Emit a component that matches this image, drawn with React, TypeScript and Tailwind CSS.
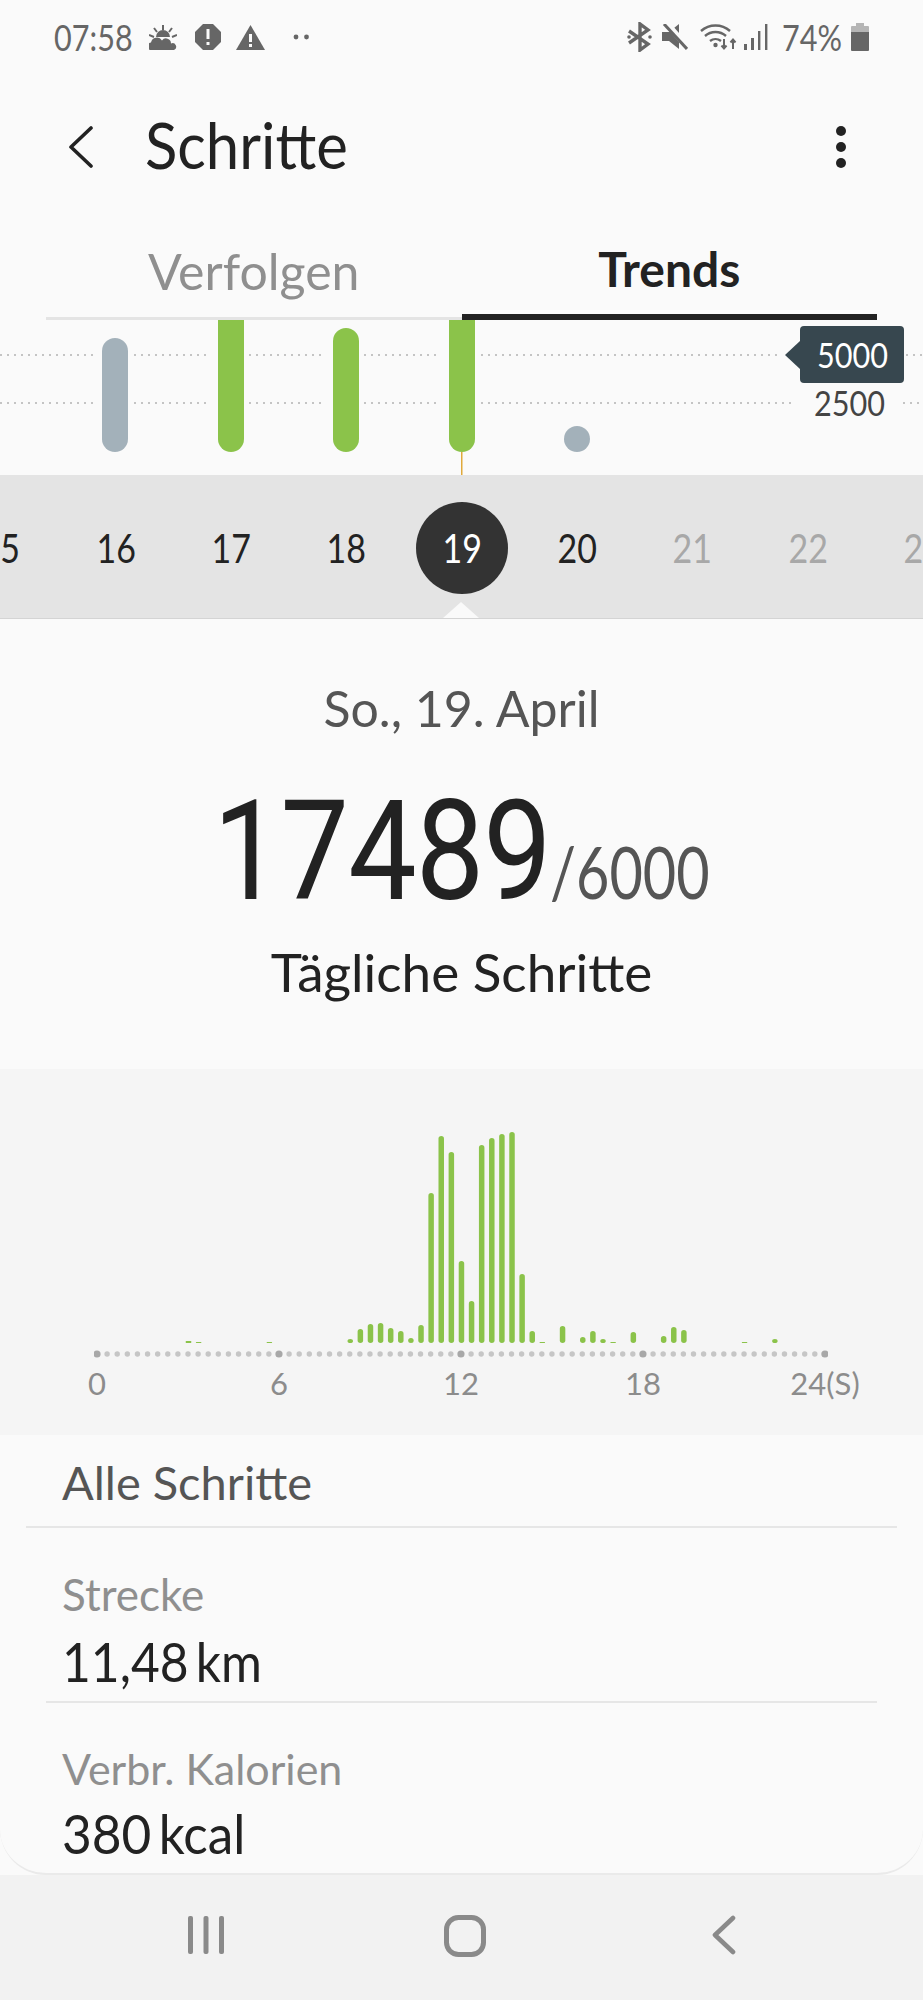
const hand = "font-['Lato',sans-serif]";

const hourly: [number, number][] = [
  [9, 2], [10, 1], [17, 1], [25, 4], [26, 14], [27, 19], [28, 20], [29, 15], [30, 12], [31, 5], [32, 18],
  [33, 150], [34, 207], [35, 191], [36, 82], [37, 42], [38, 198], [39, 205], [40, 209], [41, 211], [42, 69],
  [43, 12], [44, 1], [46, 17], [48, 6], [49, 12], [50, 4], [51, 1], [53, 11], [56, 7], [57, 16], [58, 13], [64, 1], [67, 4],
];

function StatusBar() {
  return (
    <div className="flex h-[70px] items-center justify-between pl-[54px] pr-[54px] pt-[4px] text-[#666]">
      <div className="flex items-center">
        <span className={`${hand} inline-block w-[95px] origin-left scale-x-[0.85] text-[36px] leading-none`}>07:58</span>
        <svg width="28" height="25" viewBox="0 0 28 25" fill="#666">
          <path d="M1 25a4 4 0 0 1 1-7.6a6 6 0 0 1 11-2a5 5 0 0 1 9 3a3.4 3.4 0 0 1 3 6.6z" />
          <path d="M7 12a7 7 0 0 1 14 0z" />
          <path d="M14 0v5M5 3l3 4M23 3l-3 4M0 10l5 2M28 10l-5 2" stroke="#666" strokeWidth="2" fill="none" />
        </svg>
        <svg className="ml-[18px]" width="26" height="26" viewBox="0 0 26 26">
          <polygon points="8,0 18,0 26,8 26,18 18,26 8,26 0,18 0,8" fill="#666" />
          <rect x="11.5" y="5" width="3" height="10" fill="#fafafa" />
          <rect x="11.5" y="18" width="3" height="3" fill="#fafafa" />
        </svg>
        <svg className="ml-[15px]" width="29" height="25" viewBox="0 0 29 25">
          <polygon points="14.5,0 29,25 0,25" fill="#666" />
          <rect x="13" y="9" width="3" height="8" fill="#fafafa" />
          <rect x="13" y="19" width="3" height="3" fill="#fafafa" />
        </svg>
        <svg className="ml-[28px]" width="16" height="6" viewBox="0 0 16 6" fill="#666">
          <circle cx="3" cy="3" r="2.4" />
          <circle cx="13.5" cy="3" r="2.4" />
        </svg>
      </div>
      <div className="flex items-center">
        <svg width="25" height="30" viewBox="0 0 25 30" fill="none" stroke="#666" strokeWidth="3.4">
          <path d="M2 9l19 13l-8 6V2l8 6L2 21" />
          <circle cx="2" cy="15" r="1.8" fill="#666" stroke="none" />
          <circle cx="23" cy="15" r="1.8" fill="#666" stroke="none" />
        </svg>
        <svg className="ml-[10px]" width="26" height="26" viewBox="0 0 26 26">
          <path d="M0 8h7l10-8v25l-10-8H0z" fill="#666" />
          <path d="M6 1l21 24" stroke="#fafafa" strokeWidth="6" />
          <path d="M2 0l23 25" stroke="#666" strokeWidth="3" />
        </svg>
        <svg className="ml-[12px]" width="37" height="28" viewBox="0 0 37 28" fill="none" stroke="#666">
          <path d="M1 8a22 22 0 0 1 29 0M5 13a16 16 0 0 1 21 0M10 18a9 9 0 0 1 11 0" strokeWidth="2.4" />
          <circle cx="15.5" cy="22" r="2.2" fill="#666" stroke="none" />
          <path d="M24 16v9m-2.5-2.5l2.5 3l2.5-3M33 26v-9m-2.5 2.5l2.5-3l2.5 3" strokeWidth="2" />
        </svg>
        <svg className="ml-[7px]" width="24" height="26" viewBox="0 0 24 26" fill="#666">
          <rect x="0" y="20" width="3" height="6" />
          <rect x="7" y="14" width="3" height="12" />
          <rect x="14" y="7" width="2.4" height="19" />
          <rect x="21" y="0" width="2.4" height="26" />
        </svg>
        <span className={`${hand} ml-[14px] inline-block w-[69px] origin-left scale-x-[0.85] whitespace-nowrap text-[36px] leading-none`}>74%</span>
        <svg width="18" height="28" viewBox="0 0 18 28">
          <path d="M5 0h8v3h4a1 1 0 0 1 1 1v5H0V4a1 1 0 0 1 1-1h4z" fill="#b5b5b5" />
          <path d="M0 9h18v18a1 1 0 0 1-1 1H1a1 1 0 0 1-1-1z" fill="#666" />
        </svg>
      </div>
    </div>
  );
}

function Header() {
  return (
    <div className="flex h-[154px] items-center pl-[68px] pr-[76px]">
      <svg width="26" height="42" viewBox="0 0 26 42" fill="none" stroke="#222" strokeWidth="3.6" strokeLinecap="round" strokeLinejoin="round">
        <path d="M23 2L3 21l20 19" />
      </svg>
      <h1 className={`${hand} ml-[51px] inline-block origin-left scale-x-[0.95] pb-[5px] text-[63px] leading-none text-[#222]`}>Schritte</h1>
      <svg className="ml-auto" width="12" height="42" viewBox="0 0 12 42" fill="#222">
        <circle cx="6" cy="5" r="5" />
        <circle cx="6" cy="21" r="5" />
        <circle cx="6" cy="37" r="5" />
      </svg>
    </div>
  );
}

function Tabs() {
  return (
    <div className="mx-[46px] flex h-[96px] items-end">
      <div className={`${hand} flex h-full flex-1 items-center justify-center border-b-[3px] border-[#e4e4e4] text-[50px] leading-none text-[#8f8f8f]`}>
        Verfolgen
      </div>
      <div className={`${hand} flex h-full flex-1 items-center justify-center border-b-[6px] border-[#222] text-[48px] font-bold leading-none text-[#222]`}>
        Trends
      </div>
    </div>
  );
}

function TrendChart() {
  const gridA = "M0 35H96M134 35H211M249 35H326M364 35H441M481 35H781M906 35H923";
  const gridB = "M0 83H96M134 83H211M249 83H326M364 83H441M481 83H795M903 83H923";
  return (
    <div className="relative h-[155px]">
      <svg className="block" width="923" height="155" viewBox="0 0 923 155">
        <path d={gridA} stroke="#c4c4c4" strokeWidth="2" strokeDasharray="2 5" fill="none" />
        <path d={gridB} stroke="#c4c4c4" strokeWidth="2" strokeDasharray="2 5" fill="none" />
        <path d="M102 31a13 13 0 0 1 26 0v88a13 13 0 0 1-26 0z" fill="#a3b1ba" />
        <path d="M218 0h26v119a13 13 0 0 1-26 0z" fill="#8bc34a" />
        <path d="M333 21a13 13 0 0 1 26 0v98a13 13 0 0 1-26 0z" fill="#8bc34a" />
        <path d="M449 0h26v119a13 13 0 0 1-26 0z" fill="#8bc34a" />
        <rect x="461" y="132" width="1.5" height="23" fill="#e0a93b" />
        <circle cx="577" cy="119" r="13" fill="#a3b1ba" />
      </svg>
      <div className={`${hand} absolute left-[800px] top-[6px] flex h-[57px] w-[104px] items-center justify-center rounded-[4px] bg-[#37474f] leading-none text-white`}>
        <span className="absolute left-[-15px] top-[15px] h-0 w-0 border-y-[14px] border-r-[15px] border-y-transparent border-r-[#37474f]" />
        <span className="inline-block scale-x-[0.9] text-[34px]">5000</span>
      </div>
      <div className={`${hand} absolute left-[810px] top-[66px] inline-block scale-x-[0.9] text-[34px] leading-none text-[#444]`}>2500</div>
    </div>
  );
}

function DayStrip() {
  const days = [15, 16, 17, 18, 19, 20, 21, 22, 23];
  return (
    <div className="relative h-[144px] overflow-hidden border-b-[1px] border-[#d4d4d4] bg-[#e4e4e4]">
      <div className={`${hand} ml-[-57px] flex h-[143px] w-[1040px] items-center pt-[3px] text-[40px] leading-none`}>
        {days.map((d) => (
          <div key={d} className="flex w-[115.3px] shrink-0 justify-center">
            {d === 19 ? (
              <div className="flex h-[92px] w-[92px] items-center justify-center rounded-full bg-[#333] text-white">
                <span className="inline-block scale-x-[0.85]">{d}</span>
              </div>
            ) : (
              <span className={`inline-block scale-x-[0.85] ${d > 20 ? "text-[#a8a8a8]" : "text-[#222]"}`}>{d}</span>
            )}
          </div>
        ))}
      </div>
      <span className="absolute bottom-0 left-[443px] h-0 w-0 border-x-[18px] border-b-[16px] border-x-transparent border-b-[#fafafa]" />
    </div>
  );
}

function Summary() {
  return (
    <div className="flex h-[450px] flex-col items-center pt-[62px]">
      <div className={`${hand} text-[50px] leading-[54px] text-[#555]`}>So., 19. April</div>
      <div className="mt-[51px] flex items-baseline">
        <span className="inline-block w-[330px] origin-left scale-x-[0.87] whitespace-nowrap font-['Roboto',sans-serif] text-[140px] leading-[130px] tracking-[-1px] text-[#222]">17489</span>
        <span className={`${hand} ml-[7px] inline-block w-[160px] origin-left scale-x-[0.8] whitespace-nowrap text-[72px] leading-none text-[#555]`}>/6000</span>
      </div>
      <div className={`${hand} mt-[28px] text-[53px] leading-[56px] text-[#222]`}>Tägliche Schritte</div>
    </div>
  );
}

function DayChart() {
  const dots = Array.from({ length: 73 }, (_, i) => i);
  const labels = ["0", "6", "12", "18", "24(S)"];
  return (
    <div className="flex h-[366px] flex-col bg-[#f5f5f5] pl-[97px] pt-[60px]">
      <svg className="ml-[-3px] block" width="734" height="232" viewBox="0 0 734 232">
        {hourly.map(([i, h]) => (
          <rect key={i} x={3.5 + i * 10.11 - 2.75} y={214 - h} width="5.5" height={h} rx={h > 3 ? 2.75 : 0.5} fill="#8bc34a" />
        ))}
        {dots.map((i) => (
          <circle key={i} cx={3 + i * 10.11} cy="225" r={i % 18 === 0 ? 3.6 : 2.7} fill={i % 18 === 0 ? "#a8a8a8" : "#c6c6c6"} />
        ))}
      </svg>
      <div className={`${hand} mt-[4px] flex w-[728px] justify-between text-[31px] leading-[36px] text-[#8c8c8c]`}>
        {labels.map((l) => (
          <div key={l} className="flex w-0 justify-center whitespace-nowrap">{l}</div>
        ))}
      </div>
    </div>
  );
}

function Details() {
  return (
    <div className="h-[440px] overflow-hidden rounded-b-[46px] border-b-[2px] border-[#eaeaea] bg-[#fafafa]">
      <div className="mx-[26px] flex h-[93px] items-center border-b-[2px] border-[#e6e6e6] pl-[36px] pt-[4px]">
        <span className={`${hand} text-[47px] leading-none text-[#555]`}>Alle Schritte</span>
      </div>
      <div className="mx-[46px] h-[175px] border-b-[2px] border-[#e6e6e6] pl-[16px] pt-[41px]">
        <div className={`${hand} text-[44px] leading-[50px] text-[#8f8f8f]`}>Strecke</div>
        <div className={`${hand} mt-[14px] origin-left scale-x-[0.92] text-[54px] leading-[58px] text-[#222] [word-spacing:-6px]`}>11,48 km</div>
      </div>
      <div className="mx-[46px] pl-[16px] pt-[41px]">
        <div className={`${hand} text-[43px] leading-[50px] text-[#8f8f8f]`}>Verbr. Kalorien</div>
        <div className={`${hand} mt-[11px] origin-left scale-x-[0.95] text-[54px] leading-[58px] text-[#222] [word-spacing:-6px]`}>380 kcal</div>
      </div>
    </div>
  );
}

function NavBar() {
  return (
    <div className="flex h-[125px] items-start bg-[#f2f2f2] pt-[40px] text-[#8a8a8a]">
      <svg className="ml-[187px]" width="38" height="40" viewBox="0 0 38 40" fill="#8a8a8a">
        <rect x="1" y="1" width="5" height="38" rx="2" />
        <rect x="16.5" y="1" width="5" height="38" rx="2" />
        <rect x="32" y="1" width="5" height="38" rx="2" />
      </svg>
      <svg className="ml-[219px]" width="42" height="42" viewBox="0 0 42 42" fill="none" stroke="#8a8a8a" strokeWidth="5">
        <rect x="2.5" y="2.5" width="37" height="37" rx="12" />
      </svg>
      <svg className="ml-[226px]" width="24" height="40" viewBox="0 0 24 40" fill="none" stroke="#8a8a8a" strokeWidth="4.6" strokeLinecap="round" strokeLinejoin="round">
        <path d="M21 3L3 20l18 17" />
      </svg>
    </div>
  );
}

export default function App() {
  return (
    <div className="h-[2000px] w-[923px] overflow-hidden bg-[#fafafa]">
      <StatusBar />
      <Header />
      <Tabs />
      <TrendChart />
      <DayStrip />
      <Summary />
      <DayChart />
      <Details />
      <NavBar />
    </div>
  );
}
